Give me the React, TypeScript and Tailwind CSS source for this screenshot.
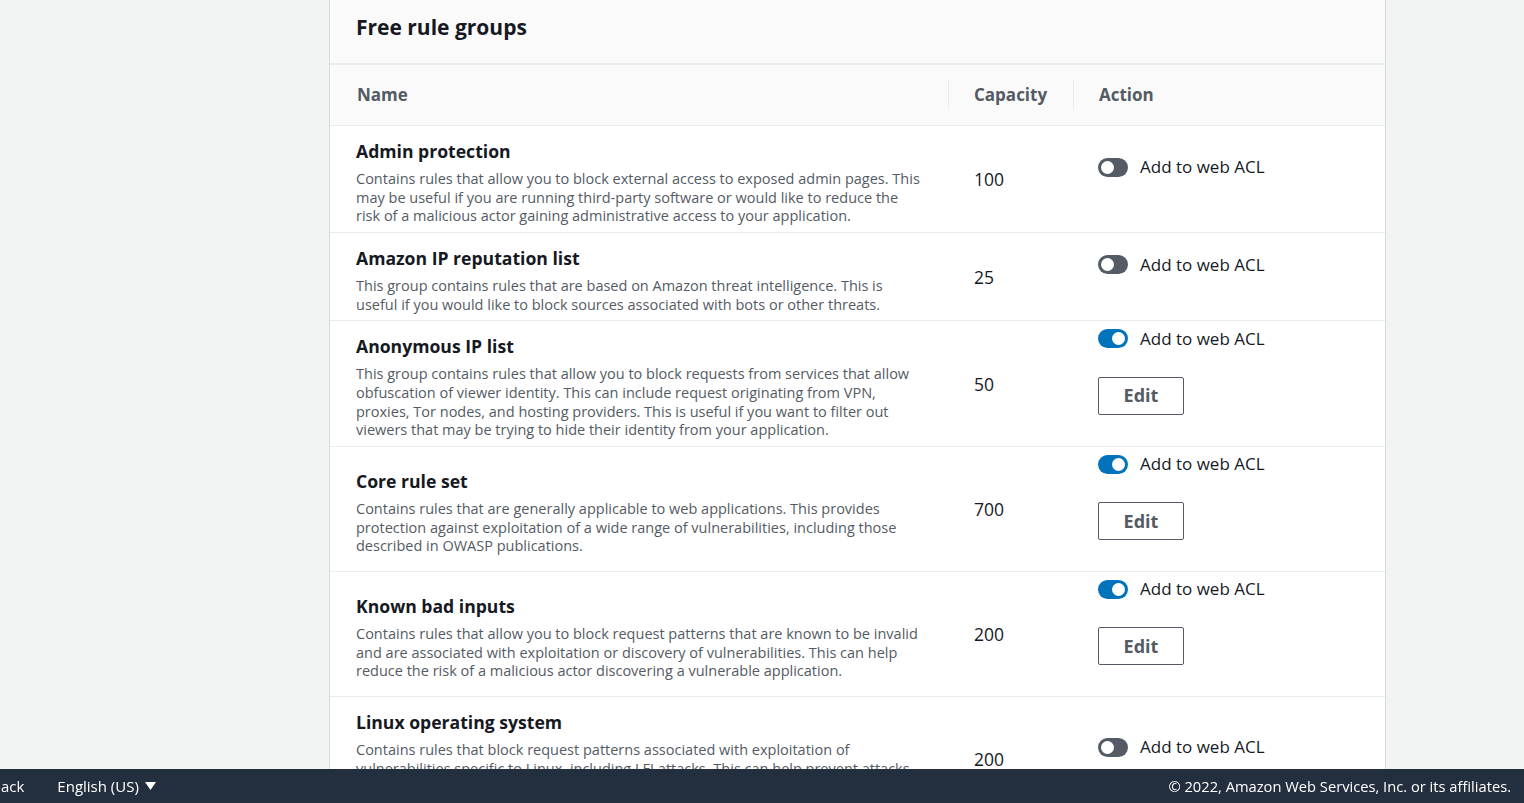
import React from "react";

type Row = { title: string; desc: string; cap: string; on: boolean };

const rows: Row[] = [
  {
    title: "Admin protection",
    desc: "Contains rules that allow you to block external access to exposed admin pages. This may be useful if you are running third-party software or would like to reduce the risk of a malicious actor gaining administrative access to your application.",
    cap: "100",
    on: false,
  },
  {
    title: "Amazon IP reputation list",
    desc: "This group contains rules that are based on Amazon threat intelligence. This is useful if you would like to block sources associated with bots or other threats.",
    cap: "25",
    on: false,
  },
  {
    title: "Anonymous IP list",
    desc: "This group contains rules that allow you to block requests from services that allow obfuscation of viewer identity. This can include request originating from VPN, proxies, Tor nodes, and hosting providers. This is useful if you want to filter out viewers that may be trying to hide their identity from your application.",
    cap: "50",
    on: true,
  },
  {
    title: "Core rule set",
    desc: "Contains rules that are generally applicable to web applications. This provides protection against exploitation of a wide range of vulnerabilities, including those described in OWASP publications.",
    cap: "700",
    on: true,
  },
  {
    title: "Known bad inputs",
    desc: "Contains rules that allow you to block request patterns that are known to be invalid and are associated with exploitation or discovery of vulnerabilities. This can help reduce the risk of a malicious actor discovering a vulnerable application.",
    cap: "200",
    on: true,
  },
  {
    title: "Linux operating system",
    desc: "Contains rules that block request patterns associated with exploitation of vulnerabilities specific to Linux, including LFI attacks. This can help prevent attacks that expose file contents or execute code for which the attacker should not have had access.",
    cap: "200",
    on: false,
  },
];

function Toggle({ on }: { on: boolean }) {
  return (
    <span
      className={
        "relative inline-flex h-[19px] w-[30px] shrink-0 items-center rounded-full " +
        (on ? "bg-[#0073bb] justify-end" : "bg-[#545b64] justify-start")
      }
    >
      <span className="mx-[3px] block h-[13px] w-[13px] rounded-full bg-white" />
    </span>
  );
}

export default function App() {
  return (
    <div
      className="relative h-[803px] w-[1524px] overflow-hidden bg-[#f2f3f3] text-[#16191f]"
      style={{ fontFamily: '"Open Sans", "Noto Sans", Arial, sans-serif' }}
    >
      <div className="ml-[329px] w-[1057px] border-x border-[#d5dbdb] bg-white">
        {/* Panel header */}
        <div className="flex h-[65px] items-center border-b-2 border-[#eaeded] bg-[#fafafa] pb-[10px] pl-[26px]">
          <h2 className="text-[21px] font-bold leading-[26px] text-[#16191f]">Free rule groups</h2>
        </div>
        {/* Column header */}
        <div className="flex h-[61px] items-center border-b border-[#eaeded] bg-[#fafafa] text-[17px] font-bold text-[#545b64]">
          <div className="w-[618px] pl-[27px]">Name</div>
          <div className="flex h-[30px] w-[125px] items-center border-l border-[#eaeded] pl-[25px]">Capacity</div>
          <div className="flex h-[30px] items-center border-l border-[#eaeded] pl-[25px]">Action</div>
        </div>
        {rows.map((r) => (
          <div key={r.title} className="flex border-b border-[#eaeded]">
            <div className="flex w-[618px] items-center pb-[6px] pl-[26px] pr-[26px] pt-[14px]">
              <div>
                <div className="text-[17.6px] font-bold leading-[22px] text-[#16191f]">{r.title}</div>
                <p className="mt-[8px] text-[14.5px] leading-[18.67px] text-[#545b64]">{r.desc}</p>
              </div>
            </div>
            <div className="flex w-[125px] items-center pl-[26px] text-[17.5px] text-[#16191f]">{r.cap}</div>
            <div className="flex items-center py-[7px] pl-[25px]">
              <div className="flex flex-col pb-[24px]">
                <div className="flex h-[20px] items-center gap-[12px]">
                  <Toggle on={r.on} />
                  <span className="text-[17px] leading-[20px] text-[#16191f]">Add to web ACL</span>
                </div>
                {r.on && (
                  <button className="mt-[28px] flex h-[38px] w-[86px] items-center justify-center rounded-[2px] border border-[#545b64] bg-white text-[18px] font-bold text-[#545b64]">
                    Edit
                  </button>
                )}
              </div>
            </div>
          </div>
        ))}
      </div>
      {/* Footer */}
      <footer className="fixed bottom-0 left-0 flex h-[34px] w-[1524px] items-center justify-between bg-[#232f3e] pr-[13px] text-[15px] text-white">
        <div className="flex items-center">
          <span className="ml-[-42px]">Feedback</span>
          <span className="ml-[33px] flex items-center gap-[6px]">
            English (US)
            <svg width="11" height="9" viewBox="0 0 11 9">
              <path d="M0 0 L11 0 L5.5 8 Z" fill="white" />
            </svg>
          </span>
        </div>
        <span className="text-[14.7px]">© 2022, Amazon Web Services, Inc. or its affiliates.</span>
      </footer>
    </div>
  );
}
